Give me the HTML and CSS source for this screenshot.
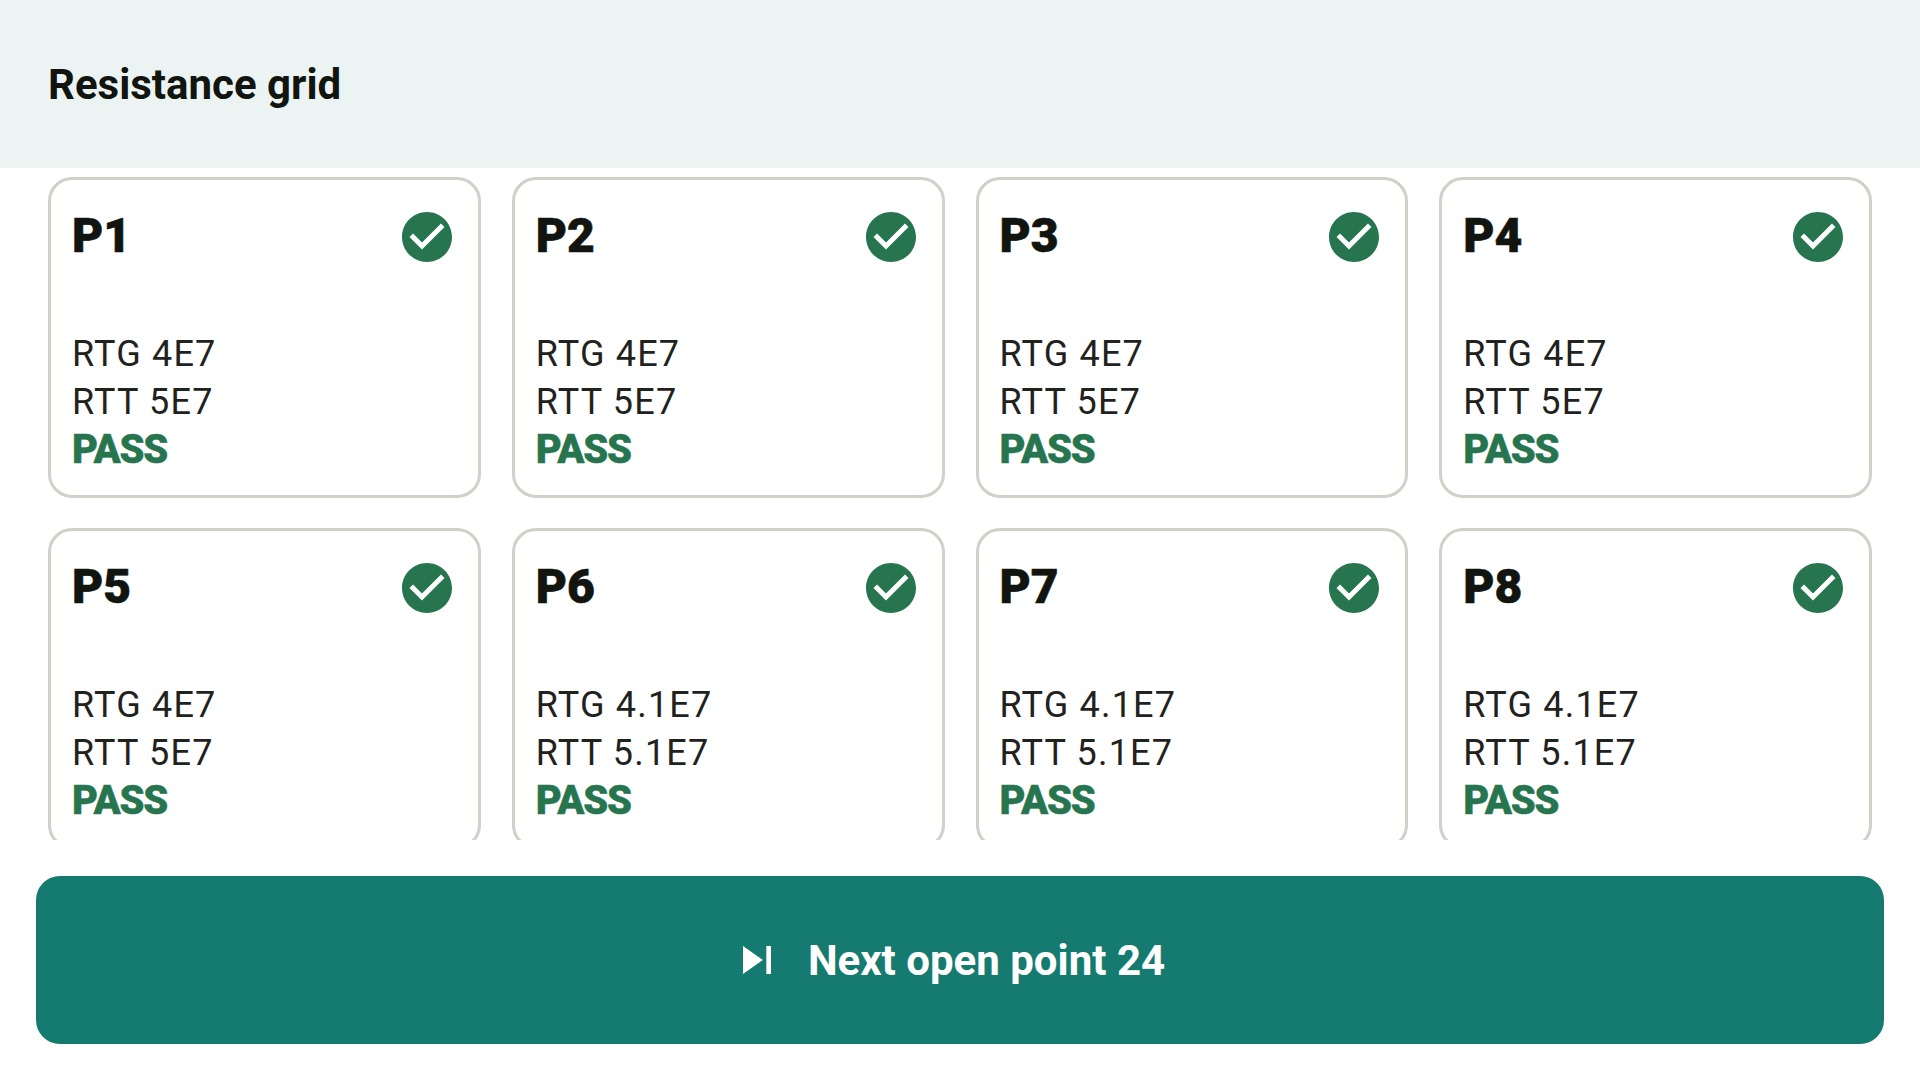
FILE: index.html
```html
<!DOCTYPE html>
<html lang="en">
<head>
    <meta charset="UTF-8">
    <title>Resistance grid</title>
    <link rel="stylesheet" href="styles.css">
</head>
<body>
    <div class="header">
        <h1>Resistance grid</h1>
    </div>
    <div class="list">
        <div class="grid">
            <div class="card">
                <div class="card-top">
                    <span class="name">P1</span>
                    <svg class="check" viewBox="0 0 24 24"><path d="M12 2C6.48 2 2 6.48 2 12s4.48 10 10 10 10-4.48 10-10S17.52 2 12 2zm-2 15l-5-5 1.41-1.41L10 14.17l7.59-7.59L19 8l-9 9z"/></svg>
                </div>
                <div class="reading">RTG 4E7</div>
                <div class="reading">RTT 5E7</div>
                <div class="result">PASS</div>
            </div>
            <div class="card">
                <div class="card-top">
                    <span class="name">P2</span>
                    <svg class="check" viewBox="0 0 24 24"><path d="M12 2C6.48 2 2 6.48 2 12s4.48 10 10 10 10-4.48 10-10S17.52 2 12 2zm-2 15l-5-5 1.41-1.41L10 14.17l7.59-7.59L19 8l-9 9z"/></svg>
                </div>
                <div class="reading">RTG 4E7</div>
                <div class="reading">RTT 5E7</div>
                <div class="result">PASS</div>
            </div>
            <div class="card">
                <div class="card-top">
                    <span class="name">P3</span>
                    <svg class="check" viewBox="0 0 24 24"><path d="M12 2C6.48 2 2 6.48 2 12s4.48 10 10 10 10-4.48 10-10S17.52 2 12 2zm-2 15l-5-5 1.41-1.41L10 14.17l7.59-7.59L19 8l-9 9z"/></svg>
                </div>
                <div class="reading">RTG 4E7</div>
                <div class="reading">RTT 5E7</div>
                <div class="result">PASS</div>
            </div>
            <div class="card">
                <div class="card-top">
                    <span class="name">P4</span>
                    <svg class="check" viewBox="0 0 24 24"><path d="M12 2C6.48 2 2 6.48 2 12s4.48 10 10 10 10-4.48 10-10S17.52 2 12 2zm-2 15l-5-5 1.41-1.41L10 14.17l7.59-7.59L19 8l-9 9z"/></svg>
                </div>
                <div class="reading">RTG 4E7</div>
                <div class="reading">RTT 5E7</div>
                <div class="result">PASS</div>
            </div>
            <div class="card">
                <div class="card-top">
                    <span class="name">P5</span>
                    <svg class="check" viewBox="0 0 24 24"><path d="M12 2C6.48 2 2 6.48 2 12s4.48 10 10 10 10-4.48 10-10S17.52 2 12 2zm-2 15l-5-5 1.41-1.41L10 14.17l7.59-7.59L19 8l-9 9z"/></svg>
                </div>
                <div class="reading">RTG 4E7</div>
                <div class="reading">RTT 5E7</div>
                <div class="result">PASS</div>
            </div>
            <div class="card">
                <div class="card-top">
                    <span class="name">P6</span>
                    <svg class="check" viewBox="0 0 24 24"><path d="M12 2C6.48 2 2 6.48 2 12s4.48 10 10 10 10-4.48 10-10S17.52 2 12 2zm-2 15l-5-5 1.41-1.41L10 14.17l7.59-7.59L19 8l-9 9z"/></svg>
                </div>
                <div class="reading">RTG 4.1E7</div>
                <div class="reading">RTT 5.1E7</div>
                <div class="result">PASS</div>
            </div>
            <div class="card">
                <div class="card-top">
                    <span class="name">P7</span>
                    <svg class="check" viewBox="0 0 24 24"><path d="M12 2C6.48 2 2 6.48 2 12s4.48 10 10 10 10-4.48 10-10S17.52 2 12 2zm-2 15l-5-5 1.41-1.41L10 14.17l7.59-7.59L19 8l-9 9z"/></svg>
                </div>
                <div class="reading">RTG 4.1E7</div>
                <div class="reading">RTT 5.1E7</div>
                <div class="result">PASS</div>
            </div>
            <div class="card">
                <div class="card-top">
                    <span class="name">P8</span>
                    <svg class="check" viewBox="0 0 24 24"><path d="M12 2C6.48 2 2 6.48 2 12s4.48 10 10 10 10-4.48 10-10S17.52 2 12 2zm-2 15l-5-5 1.41-1.41L10 14.17l7.59-7.59L19 8l-9 9z"/></svg>
                </div>
                <div class="reading">RTG 4.1E7</div>
                <div class="reading">RTT 5.1E7</div>
                <div class="result">PASS</div>
            </div>
        </div>
    </div>
    <div class="footer">
        <button class="next-btn">
            <svg class="skip" viewBox="0 0 24 24"><path d="M6 18l8.5-6L6 6v12zM16 6v12h2V6h-2z"/></svg>
            <span>Next open point 24</span>
        </button>
    </div>
</body>
</html>
```

FILE: styles.css
```css
*{
    margin: 0;
    padding: 0;
    box-sizing: border-box;
}

body{
    width: 1920px;
    height: 1080px;
    overflow: hidden;
    display: flex;
    flex-direction: column;
    font-family: Roboto, sans-serif;
    background: #fff;
    color: #11140f;
}

.header{
    height: 168px;
    flex: none;
    display: flex;
    align-items: center;
    padding: 0 48px;
    background: #ebf4f3;
}

.header h1{
    font-size: 42px;
    font-weight: 700;
}

.list{
    flex: 1;
    min-height: 0;
    overflow: hidden;
    padding: 9px 48px 0;
}

.grid{
    display: grid;
    grid-template-columns: repeat(4, 1fr);
    gap: 30px 31px;
}

.card{
    height: 321px;
    padding: 27px 21px 0;
    border: 3px solid #cdd3c7;
    border-radius: 24px;
    background: #fff;
}

.card-top{
    display: flex;
    justify-content: space-between;
    align-items: center;
    height: 60px;
    margin-bottom: 63px;
}

.name{
    margin-bottom: 3px;
    font-size: 48px;
    font-weight: 900;
    -webkit-text-stroke: 0.6px #11140f;
}

.check{
    width: 60px;
    height: 60px;
    fill: #27754f;
}

.reading{
    font-size: 36px;
    line-height: 48px;
    letter-spacing: 1.2px;
    color: #1f221d;
}

.result{
    font-size: 40px;
    line-height: 48px;
    font-weight: 900;
    letter-spacing: -1.2px;
    color: #27754f;
    -webkit-text-stroke: 0.4px #27754f;
}

.footer{
    flex: none;
    padding: 36px;
}

.next-btn{
    width: 100%;
    height: 168px;
    display: flex;
    align-items: center;
    justify-content: center;
    gap: 23px;
    padding-right: 26px;
    border: none;
    border-radius: 24px;
    background: #157a6f;
    color: #fff;
    font-family: Roboto, sans-serif;
    font-size: 42px;
    font-weight: 700;
}

.skip{
    width: 56px;
    height: 56px;
    fill: #fff;
}
```
